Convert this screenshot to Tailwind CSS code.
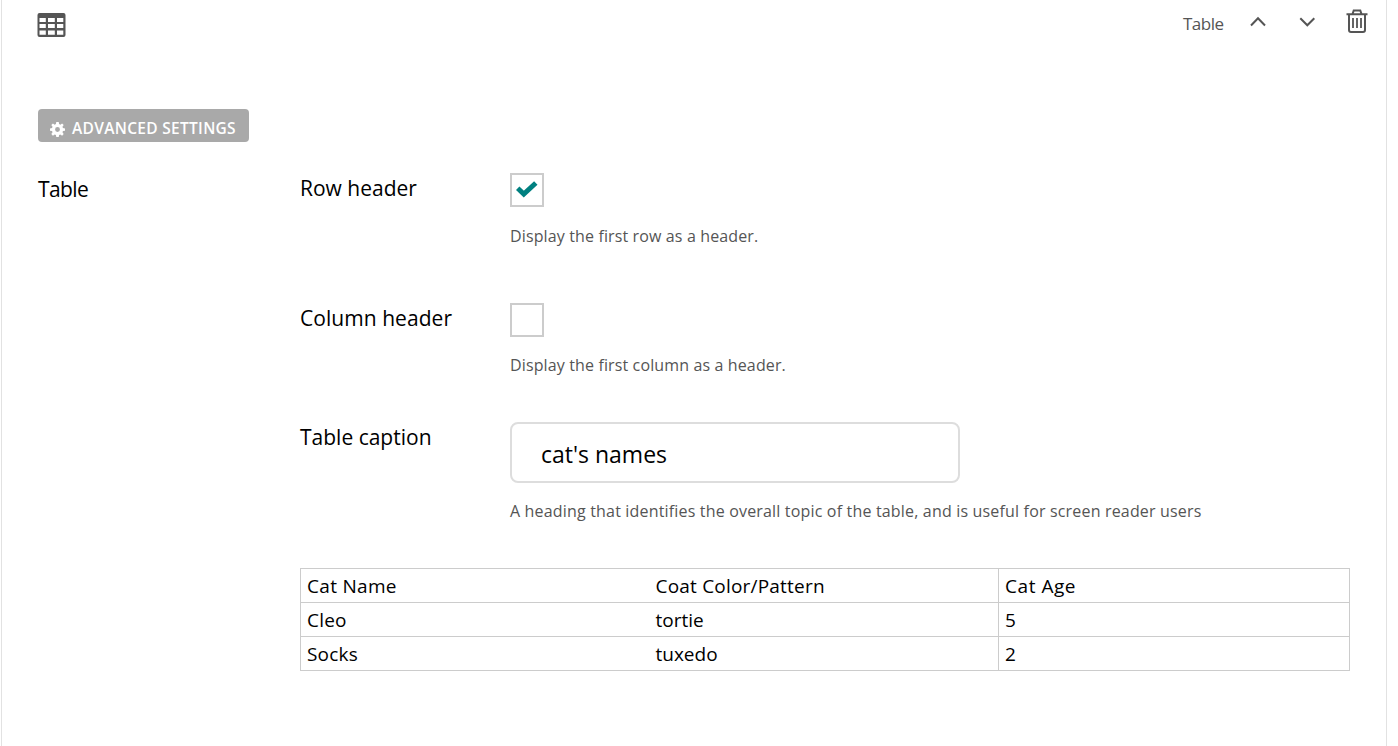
<!DOCTYPE html>
<html lang="en">
<head>
<meta charset="utf-8">
<title>Table block</title>
<script src="https://cdn.jsdelivr.net/npm/@tailwindcss/browser@4"></script>
</head>
<body class="bg-white text-black font-['Open_Sans','Noto_Sans',sans-serif] overflow-hidden">
<section class="ml-px w-[1386px] h-[746px] border-x border-[#e2e2e2] flex flex-col">
  <header class="h-[109px] pl-[35px] pr-[18px] flex justify-between items-start">
    <svg class="w-[29px] h-6 mt-[13px]" viewBox="0 0 29 24" aria-label="Table">
      <path fill="#555" fill-rule="evenodd" d="M2.5 0H26.5Q28.5 0 28.5 2V22Q28.5 24 26.5 24H2.5Q.5 24 .5 22V2Q.5 0 2.5 0ZM2.5 5V9H8.8V5ZM11 5V9H17.8V5ZM20 5V9H26.3V5ZM2.5 11V15H8.8V11ZM11 11V15H17.8V11ZM20 11V15H26.3V11ZM2.5 17.5V21.7H8.8V17.5ZM11 17.5V21.7H17.8V17.5ZM20 17.5V21.7H26.3V17.5Z"/>
    </svg>
    <div class="flex items-start text-[#555]">
      <span class="mt-[10px] w-[67px] text-[17px] leading-[28px] tracking-[-0.5px]">Table</span>
      <svg class="w-4 h-3 mt-4" viewBox="0 0 16 12" fill="none" stroke="#555" stroke-width="2"><path d="M1 9.5L8 2.3L15 9.5"/></svg>
      <svg class="w-4 h-3 mt-4 ml-[33px]" viewBox="0 0 16 12" fill="none" stroke="#555" stroke-width="2"><path d="M1.3 2.3L8.3 9.3L15.3 2.3"/></svg>
      <svg class="w-[22px] h-6 mt-[9px] ml-[31px]" viewBox="0 0 22 24" fill="none" stroke="#555" stroke-width="2"><path d="M.5 5.2H21.5M6.5 5L7.7 1.6H14.3L15.5 5M3 5V21Q3 23 5 23H17Q19 23 19 21V5"/><path stroke-width="1.8" d="M7 9V19M11 9V19M15 9V19"/></svg>
    </div>
  </header>
  <div class="px-9">
    <button class="h-[33px] w-[211px] rounded bg-[#a9a9a9] text-white flex items-center pl-3 pt-1 text-[15.5px] leading-6 font-semibold tracking-[0.3px]">
      <svg class="w-[15px] h-[15px] mr-[7px] mt-[3px]" viewBox="0 0 16 16"><path fill="#fff" fill-rule="evenodd" d="M6.7 0H9.3L9.7 2.2L11 2.8L12.9 1.5L14.6 3.2L13.3 5L13.8 6.4L16 6.8V9.2L13.8 9.7L13.3 11L14.6 12.9L12.9 14.6L11 13.3L9.7 13.8L9.3 16H6.7L6.3 13.8L5 13.3L3.1 14.6L1.4 12.9L2.7 11L2.2 9.7L0 9.2V6.8L2.2 6.4L2.7 5L1.4 3.2L3.1 1.5L5 2.8L6.3 2.2ZM8 5.4A2.6 2.6 0 1 0 8 10.6A2.6 2.6 0 1 0 8 5.4Z"/></svg>
      <span>ADVANCED SETTINGS</span>
    </button>
  </div>
  <div class="px-9 flex mt-[31px]">
    <h2 class="w-[262px] text-[21px] leading-[33px] tracking-[-0.6px]"><span>Table</span></h2>
    <div class="w-[1050px]">
      <div class="flex h-[130px]">
        <label class="w-[210px] text-[21px] leading-[31px]"><span>Row header</span></label>
        <div>
          <div class="w-[34px] h-[34px] border-2 border-[#ccc] flex items-center justify-center">
            <svg class="w-[22px] h-[18px] mb-0.5" viewBox="0 0 22 18"><path d="M1.7 8.2L7.8 14L19.8 3" fill="none" stroke="#008080" stroke-width="5"/></svg>
          </div>
          <p class="mt-[17px] text-[16px] leading-6 tracking-[0.13px] text-[#555]"><span>Display the first row as a header.</span></p>
        </div>
      </div>
      <div class="flex h-[119px]">
        <label class="w-[210px] text-[21px] leading-[31px] tracking-[0.05px]"><span>Column header</span></label>
        <div>
          <div class="w-[34px] h-[34px] border-2 border-[#ccc]"></div>
          <p class="mt-4 text-[16px] leading-6 tracking-[0.13px] text-[#555]"><span>Display the first column as a header.</span></p>
        </div>
      </div>
      <div class="flex h-[146px]">
        <label class="w-[210px] text-[21px] leading-[31px]"><span>Table caption</span></label>
        <div>
          <div class="w-[450px] h-[61px] border-2 border-[#ddd] rounded-lg flex items-center pl-[29px] pt-[2px] text-[23px] leading-8"><span>cat's names</span></div>
          <p class="mt-4 text-[16px] leading-6 tracking-[0.175px] text-[#555]"><span>A heading that identifies the overall topic of the table, and is useful for screen reader users</span></p>
        </div>
      </div>
      <div class="h-[103px] border border-[#ccc] divide-y divide-[#ccc] text-[19px] leading-[35px] tracking-[0.2px]">
        <div class="flex h-[34px]"><div class="w-[348px] pl-1.5 tracking-[0.3px]"><span>Cat Name</span></div><div class="w-[349px] pl-[6.5px]"><span>Coat Color/Pattern</span></div><div class="grow border-l border-[#ccc] pl-1.5 tracking-[0.55px]"><span>Cat Age</span></div></div>
        <div class="flex h-[34px]"><div class="w-[348px] pl-1.5"><span>Cleo</span></div><div class="w-[349px] pl-[6.5px] tracking-normal"><span>tortie</span></div><div class="grow border-l border-[#ccc] pl-1.5"><span>5</span></div></div>
        <div class="flex h-[33px]"><div class="w-[348px] pl-1.5"><span>Socks</span></div><div class="w-[349px] pl-[6.5px] tracking-normal"><span>tuxedo</span></div><div class="grow border-l border-[#ccc] pl-1.5"><span>2</span></div></div>
      </div>
    </div>
  </div>
</section>
</body>
</html>
